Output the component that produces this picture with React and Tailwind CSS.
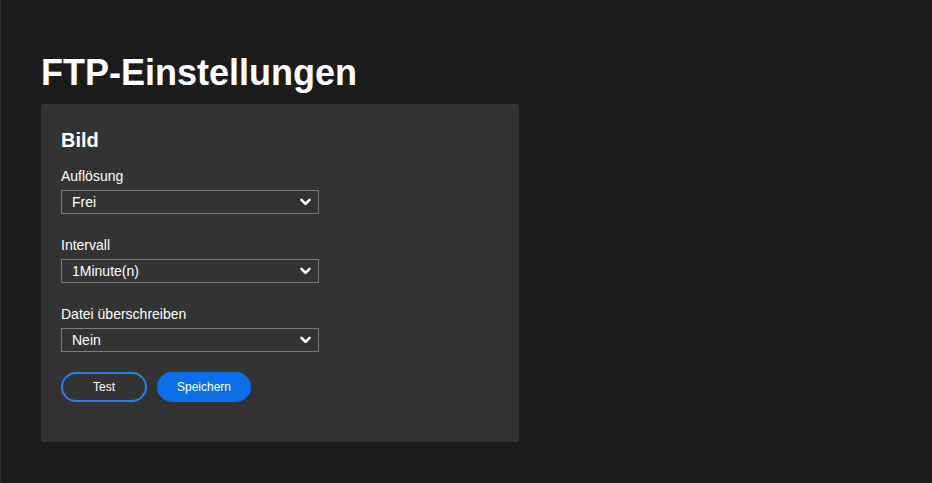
import React from "react";

function Chevron() {
  return (
    <svg width="11" height="8" viewBox="0 0 11 8" className="shrink-0">
      <polyline points="1.5,1.8 5.5,5.8 9.5,1.8" fill="none" stroke="#ffffff" strokeWidth="2.6" strokeLinecap="round" strokeLinejoin="round" />
    </svg>
  );
}

function Field({ label, value }) {
  return (
    <div className="flex flex-col">
      <div className="text-[14px] leading-[20px] text-white">{label}</div>
      <div className="mt-[4px] flex h-[24px] w-[258px] items-center justify-between border border-[#7a7a7a] pl-[10px] pr-[7px] text-[14px] text-white">
        <span>{value}</span>
        <Chevron />
      </div>
    </div>
  );
}

export default function App() {
  return (
    <div
      className="min-h-screen w-full border-l border-[#2b2b2b] bg-[#1c1c1c] pl-[40px] pt-[51px]"
      style={{ fontFamily: '"Liberation Sans", Arial, sans-serif' }}
    >
      <h1 className="mb-[10px] text-[36px] font-bold leading-[43px] text-white">FTP-Einstellungen</h1>
      <div className="w-[478px] rounded-[3px] bg-[#333333] px-[20px] pb-[40px] pt-[24px]">
        <h2 className="mb-[14px] text-[20px] font-bold leading-[24px] text-white">Bild</h2>
        <div className="flex flex-col gap-[21px]">
          <Field label="Auflösung" value="Frei" />
          <Field label="Intervall" value="1Minute(n)" />
          <Field label="Datei überschreiben" value="Nein" />
        </div>
        <div className="mt-[20px] flex gap-[10px]">
          <button className="flex h-[30px] w-[86px] items-center justify-center rounded-full border-2 border-[#2f7fe3] text-[12px] text-white">
            Test
          </button>
          <button className="flex h-[30px] w-[94px] items-center justify-center rounded-full bg-[#0a6fe9] text-[12px] text-white">
            Speichern
          </button>
        </div>
      </div>
    </div>
  );
}
